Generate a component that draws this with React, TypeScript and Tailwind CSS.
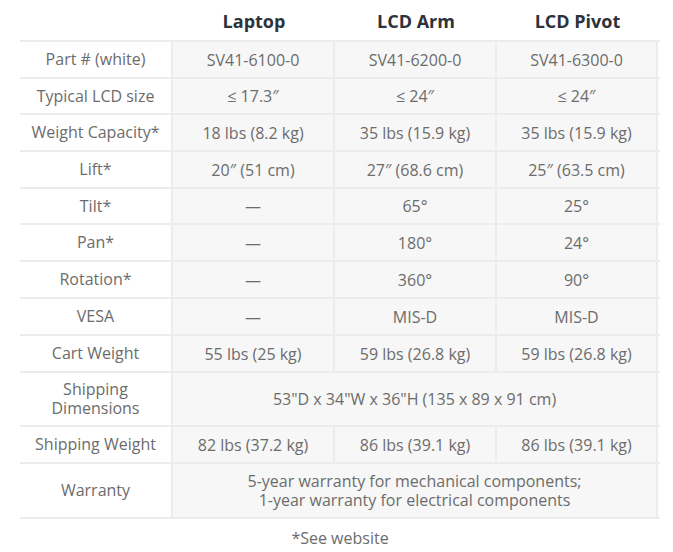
import React from "react";

type Row = { label: string; cells: string[] | string; h: string };

const rows: Row[] = [
  { label: "Part # (white)", cells: ["SV41-6100-0", "SV41-6200-0", "SV41-6300-0"], h: "h-[37px]" },
  { label: "Typical LCD size", cells: ["≤ 17.3″", "≤ 24″", "≤ 24″"], h: "h-[36px]" },
  { label: "Weight Capacity*", cells: ["18 lbs (8.2 kg)", "35 lbs (15.9 kg)", "35 lbs (15.9 kg)"], h: "h-[37px]" },
  { label: "Lift*", cells: ["20″ (51 cm)", "27″ (68.6 cm)", "25″ (63.5 cm)"], h: "h-[37px]" },
  { label: "Tilt*", cells: ["—", "65°", "25°"], h: "h-[36px]" },
  { label: "Pan*", cells: ["—", "180°", "24°"], h: "h-[37px]" },
  { label: "Rotation*", cells: ["—", "360°", "90°"], h: "h-[37px]" },
  { label: "VESA", cells: ["—", "MIS-D", "MIS-D"], h: "h-[37px]" },
  { label: "Cart Weight", cells: ["55 lbs (25 kg)", "59 lbs (26.8 kg)", "59 lbs (26.8 kg)"], h: "h-[37px]" },
  { label: "Shipping\nDimensions", cells: '53"D x 34"W x 36"H (135 x 89 x 91 cm)', h: "h-[54px]" },
  { label: "Shipping Weight", cells: ["82 lbs (37.2 kg)", "86 lbs (39.1 kg)", "86 lbs (39.1 kg)"], h: "h-[37px]" },
  {
    label: "Warranty",
    cells: "5-year warranty for mechanical components;\n1-year warranty for electrical components",
    h: "h-[55px]",
  },
];

export default function App() {
  return (
    <div
      className="w-[673px] h-[552px] bg-white text-[#6c6c6c] text-[16px]"
      style={{ fontFamily: "'Open Sans', sans-serif" }}
    >
      <div className="pl-[20px] w-[660px]">
        <div className="grid grid-cols-[153px_162px_162px_161px] h-[40px] items-center text-[18px] font-bold text-[#2e323b]">
          <div />
          <div className="text-center pt-[2px]">Laptop</div>
          <div className="text-center pt-[2px]">LCD Arm</div>
          <div className="text-center pt-[2px]">LCD Pivot</div>
        </div>
        <div className="border-t-2 border-[#ececec]">
          {rows.map((r) => (
            <div key={r.label} className={`grid grid-cols-[153px_162px_162px_161px] ${r.h} border-b-2 border-[#ececec]`}>
              <div className="flex items-center justify-center text-center border-r-2 border-[#ececec] whitespace-pre-line leading-[19px] bg-white">
                {r.label}
              </div>
              {Array.isArray(r.cells) ? (
                r.cells.map((c, i) => (
                  <div
                    key={i}
                    className="flex items-center justify-center bg-[#f7f7f7] border-r-2 border-[#ececec]"
                  >
                    {c}
                  </div>
                ))
              ) : (
                <div className="col-span-3 flex items-center justify-center text-center bg-[#f7f7f7] border-r-2 border-[#ececec] whitespace-pre-line leading-[19px]">
                  {r.cells}
                </div>
              )}
            </div>
          ))}
        </div>
        <div className="text-center mt-[7px]">*See website</div>
      </div>
    </div>
  );
}
